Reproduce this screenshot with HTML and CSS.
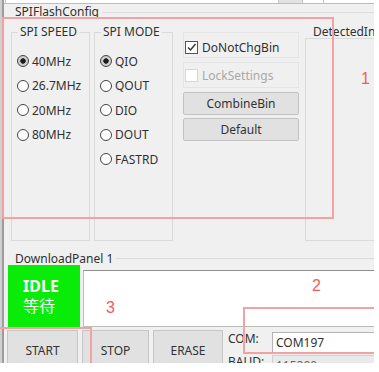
FILE: index.html
```html
<!DOCTYPE html>
<html>
<head>
<meta charset="utf-8">
<link rel="stylesheet" href="styles.css">
</head>
<body>
<div class="app">
  <div class="tabs"><span class="tab t1"></span><span class="tab t2"></span><span class="tab t3"></span><span class="tab t4"></span></div>

  <div class="legend-row"><span class="legend">SPIFlashConfig</span></div>

  <div class="groups">
    <div class="grp grp-speed">
      <span class="grp-title">SPI SPEED</span>
      <ul class="radios">
        <li><span class="radio on"></span>40MHz</li>
        <li><span class="radio"></span>26.7MHz</li>
        <li><span class="radio"></span>20MHz</li>
        <li><span class="radio"></span>80MHz</li>
      </ul>
    </div>
    <div class="grp grp-mode">
      <span class="grp-title">SPI MODE</span>
      <ul class="radios">
        <li><span class="radio on"></span>QIO</li>
        <li><span class="radio"></span>QOUT</li>
        <li><span class="radio"></span>DIO</li>
        <li><span class="radio"></span>DOUT</li>
        <li><span class="radio"></span>FASTRD</li>
      </ul>
    </div>
    <div class="controls">
      <div class="chk-frame first"><span class="chk on"><svg width="11" height="11" viewBox="0 0 11 11"><path d="M2 5.5 L4.5 8 L9.5 2" fill="none" stroke="#333" stroke-width="1.4"/></svg></span>DoNotChgBin</div>
      <div class="chk-frame disabled"><span class="chk"></span>LockSettings</div>
      <button class="btn combine">CombineBin</button>
      <button class="btn default">Default</button>
    </div>
    <div class="detected">
      <span class="panel-label">DetectedInfo</span>
      <div class="panel"></div>
    </div>
  </div>

  <div class="legend-row dl"><span class="legend">DownloadPanel 1</span></div>

  <div class="dl-row">
    <div class="status"><span class="idle">IDLE</span><span class="wait">等待</span></div>
    <div class="log"></div>
  </div>

  <div class="actions">
    <button class="abtn start">START</button>
    <button class="abtn stop">STOP</button>
    <button class="abtn erase">ERASE</button>
    <div class="port">
      <span class="plabel">COM:</span><div class="field">COM197</div>
      <span class="plabel">BAUD:</span><div class="field baud">115200</div>
    </div>
  </div>

  <div class="mark box1"></div>
  <div class="mark box2"></div>
  <div class="mark box3"></div>
  <span class="num n1">1</span>
  <span class="num n2">2</span>
  <span class="num n3">3</span>
</div>
</body>
</html>
```

FILE: styles.css
```css
html, body {
  margin: 0;
  padding: 0;
  background: #ffffff;
}
body {
  font-family: "Noto Sans", "Noto Sans CJK SC", sans-serif;
  font-size: 12px;
  color: #303030;
}
.app {
  position: relative;
  width: 374px;
  height: 363px;
  padding-left: 4px;
  box-sizing: border-box;
  overflow: hidden;
  background: linear-gradient(to right, #d0d0d0 0 2px, #9c9c9c 2px 4px, #f0f0f0 4px);
}

/* top tab strip */
.tabs {
  display: flex;
  height: 3px;
  background: #ffffff;
  border-bottom: 1px solid #bdbdbd;
}
.tab { border-right: 1px solid #c4c4c4; }
.t1 { width: 1px; }
.t2 { width: 272px; }
.t3 { width: 23px; background: #e2e2e2; }
.t4 { width: 20px; }

/* legend rows */
.legend-row {
  display: flex;
  align-items: center;
  height: 14px;
  line-height: 14px;
  margin-top: 1px;
}
.legend-row::after {
  content: "";
  flex: 1;
  border-top: 1px solid #dcdcdc;
}
.legend {
  margin-left: 11px;
  padding-right: 3px;
  white-space: nowrap;
}
.legend-row.dl {
  margin-top: 11px;
  height: 13px;
  line-height: 13px;
}

/* group boxes */
.groups {
  display: flex;
  align-items: flex-start;
  margin-top: 13px;
  height: 209px;
}
.grp {
  box-sizing: border-box;
  width: 79px;
  height: 209px;
  border: 1px solid #d9d9d9;
  flex: none;
}
.grp-speed { margin-left: 7px; }
.grp-mode { margin-left: 4px; }
.grp-title {
  display: block;
  width: max-content;
  line-height: 14px;
  margin: -8px 0 0 6px;
  padding: 0 2px;
  background: #f0f0f0;
}
.radios {
  list-style: none;
  margin: 0;
  padding: 10px 0 0 5px;
}
.radios li {
  display: flex;
  align-items: center;
  height: 24.5px;
  white-space: nowrap;
}
.radio {
  flex: none;
  width: 12px;
  height: 12px;
  box-sizing: border-box;
  border-radius: 50%;
  border: 1px solid #444;
  background: #fff;
  margin-right: 3px;
}
.radio.on {
  background: radial-gradient(circle, #1c1c1c 0 2.4px, #cfcfcf 3px);
}

/* check column */
.controls {
  flex: none;
  width: 116px;
  margin-left: 10px;
}
.chk-frame {
  display: flex;
  align-items: center;
  height: 26px;
  box-sizing: border-box;
  border: 1px solid #e4e4e4;
  padding-left: 1px;
  white-space: nowrap;
}
.chk-frame.first { padding-top: 5px; }
.chk-frame.disabled {
  margin-top: 4px;
  color: #a9a9a9;
}
.chk {
  flex: none;
  width: 13px;
  height: 13px;
  box-sizing: border-box;
  border: 1px solid #555;
  background: #fff;
  margin-right: 4px;
  display: flex;
  align-items: center;
  justify-content: center;
}
.disabled .chk { border-color: #d8d8d8; }
.btn {
  display: block;
  width: 100%;
  height: 23px;
  padding: 0;
  border: 1px solid #c3c3c3;
  border-radius: 2px;
  background: #e1e1e1;
  font: inherit;
  color: #333;
}
.combine { margin-top: 4px; }
.default { margin-top: 3px; }

/* detected info */
.detected {
  flex: 1;
  min-width: 0;
  margin-left: 6px;
}
.panel-label {
  display: block;
  line-height: 14px;
  margin: -7px 0 0 8px;
  white-space: nowrap;
}
.panel {
  margin-top: -1px;
  height: 203px;
  box-sizing: border-box;
  border: 1px solid #dadada;
  border-right: none;
}

/* download panel */
.dl-row {
  display: flex;
  align-items: flex-start;
}
.status {
  flex: none;
  margin-left: 4px;
  width: 72px;
  height: 62px;
  box-sizing: border-box;
  padding: 11px 0 0 15px;
  background: #08ec08;
  color: #ffffff;
  display: flex;
  flex-direction: column;
}
.idle {
  font-size: 16px;
  font-weight: bold;
  line-height: 20px;
}
.wait {
  font-size: 16px;
  line-height: 21px;
}
.log {
  flex: 1;
  margin-left: 3px;
  margin-top: 5px;
  height: 57px;
  box-sizing: border-box;
  background: #ffffff;
  border: 1px solid #bcbcbc;
  border-top-color: #8e8e8e;
  border-right: none;
}

/* actions */
.actions {
  display: flex;
  align-items: flex-start;
  margin-top: 3px;
}
.abtn {
  flex: none;
  height: 40px;
  padding: 0;
  border: 1px solid #c6c6c6;
  background: #e1e1e1;
  font: inherit;
  color: #333;
}
.start { margin-left: 3px; width: 71px; }
.stop { margin-left: 4px; width: 67px; }
.erase { margin-left: 4px; width: 70px; }
.port {
  flex: 1;
  margin-left: 5px;
  margin-top: 2px;
  display: grid;
  grid-template-columns: 44px 1fr;
  row-gap: 2px;
  align-items: start;
}
.plabel {
  line-height: 16px;
  margin-top: -1px;
}
.field {
  height: 21px;
  box-sizing: border-box;
  border: 1px solid #b4b4b4;
  border-right: none;
  background: #ffffff;
  padding-left: 3px;
  line-height: 19px;
  white-space: nowrap;
}
.field.baud {
  background: #eaeaea;
  border-color: #d0d0d0;
  color: #666;
}

/* annotations */
.mark {
  position: absolute;
  box-sizing: border-box;
  border: 2px solid #f3a2a2;
}
.box1 { left: 2px; top: 17px; width: 332px; height: 202px; }
.box2 { left: 243px; top: 307px; width: 150px; height: 47px; }
.box3 { left: -10px; top: 327px; width: 102px; height: 60px; }
.num {
  position: absolute;
  font-family: "Liberation Sans", sans-serif;
  font-size: 16px;
  line-height: 16px;
  color: #f25b5b;
}
.n1 { left: 361px; top: 71px; }
.n2 { left: 312px; top: 278px; }
.n3 { left: 106px; top: 300px; }
```
